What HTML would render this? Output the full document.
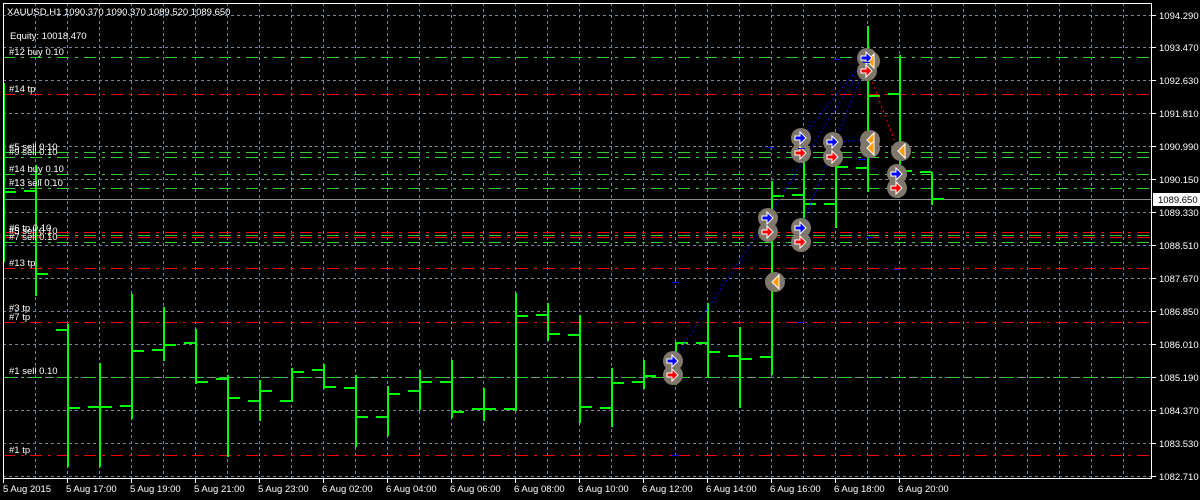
<!DOCTYPE html>
<html><head><meta charset="utf-8">
<style>
html,body{margin:0;padding:0;background:#000;width:1200px;height:500px;overflow:hidden}
svg{display:block}
text{font-family:"Liberation Sans",sans-serif;font-size:9.5px;fill:#fff}
</style></head><body>
<svg id="s" width="1200" height="500" xmlns="http://www.w3.org/2000/svg">
<rect width="1200" height="500" fill="#000"/>
<g id="grid"></g>
<g id="lines"></g>
<line x1="3" y1="199.5" x2="1152" y2="199.5" stroke="#8c8c8c" stroke-width="1"/>
<g id="bars"></g>
<g id="trades" stroke-dasharray="2 3" stroke-width="1" fill="none">
<line x1="673" y1="361" x2="768" y2="218" stroke="#0000ff"/>
<line x1="768" y1="218" x2="867" y2="58" stroke="#0000ff"/>
<line x1="801" y1="138" x2="867" y2="58" stroke="#0000ff"/>
<line x1="801" y1="228" x2="867" y2="62" stroke="#0000ff"/>
<line x1="833" y1="142" x2="870" y2="140" stroke="#0000ff"/>
<line x1="869" y1="73" x2="898" y2="150" stroke="#ff0000"/>
</g>
<g id="marks"></g>
<g id="tickmarks"></g>
<rect x="3.5" y="3.5" width="1148" height="475" fill="none" stroke="#fff" stroke-width="1"/>
<text x="7" y="15">XAUUSD,H1  1090.370 1090.370 1089.520 1089.650</text>
<text x="10" y="39">Equity: 10018.470</text>
<text x="9" y="55">#12 buy 0.10</text>
<text x="9" y="92">#14 tp</text>
<text x="9" y="150">#5 sell 0.10</text>
<text x="9" y="155">#9 sell 0.10</text>
<text x="9" y="172">#14 buy 0.10</text>
<text x="9" y="186">#13 sell 0.10</text>
<text x="9" y="231">#6 tp 0.10</text>
<text x="9" y="234">#5 sell 0.10</text>
<text x="9" y="240">#7 sell 0.10</text>
<text x="9" y="266">#13 tp</text>
<text x="9" y="311">#3 tp</text>
<text x="9" y="320">#7 tp</text>
<text x="9" y="374">#1 sell 0.10</text>
<text x="9" y="453">#1 tp</text>
<g id="axis">
<text x="1159" y="19">1094.290</text>
<text x="1159" y="51">1093.470</text>
<text x="1159" y="84">1092.630</text>
<text x="1159" y="117">1091.810</text>
<text x="1159" y="150">1090.990</text>
<text x="1159" y="183">1090.150</text>
<text x="1159" y="216">1089.330</text>
<text x="1159" y="249">1088.510</text>
<text x="1159" y="282">1087.670</text>
<text x="1159" y="315">1086.850</text>
<text x="1159" y="348">1086.010</text>
<text x="1159" y="381">1085.190</text>
<text x="1159" y="414">1084.370</text>
<text x="1159" y="447">1083.530</text>
<text x="1159" y="480">1082.710</text>
</g>
<rect x="1153" y="193" width="47" height="13" fill="#fff"/>
<text x="1158" y="203" style="fill:#000">1089.650</text>
<g id="dates">
<text x="3" y="492">5 Aug 2015</text>
<text x="66" y="492">5 Aug 17:00</text>
<text x="130" y="492">5 Aug 19:00</text>
<text x="194" y="492">5 Aug 21:00</text>
<text x="258" y="492">5 Aug 23:00</text>
<text x="322" y="492">6 Aug 02:00</text>
<text x="386" y="492">6 Aug 04:00</text>
<text x="450" y="492">6 Aug 06:00</text>
<text x="514" y="492">6 Aug 08:00</text>
<text x="578" y="492">6 Aug 10:00</text>
<text x="642" y="492">6 Aug 12:00</text>
<text x="706" y="492">6 Aug 14:00</text>
<text x="770" y="492">6 Aug 16:00</text>
<text x="834" y="492">6 Aug 18:00</text>
<text x="898" y="492">6 Aug 20:00</text>
</g>
</svg>
<script>
var NS="http://www.w3.org/2000/svg";
function el(p,t,a){var e=document.createElementNS(NS,t);for(var k in a)e.setAttribute(k,a[k]);document.getElementById(p).appendChild(e);return e;}
var ys=[15,47,80,113,146,179,212,245,278,311,344,377,410,443,476];
ys.forEach(function(y){el('grid','line',{x1:3,x2:1152,y1:y+.5,y2:y+.5,stroke:'#778899','stroke-dasharray':'3 3'});
 el('tickmarks','line',{x1:1152,x2:1156,y1:y+.5,y2:y+.5,stroke:'#fff'});});
for(var x=35;x<1152;x+=32){el('grid','line',{x1:x+.5,x2:x+.5,y1:3,y2:478,stroke:'#778899','stroke-dasharray':'3 3'});}
for(var x=3;x<=899;x+=64){el('tickmarks','line',{x1:x+.5,x2:x+.5,y1:478,y2:483,stroke:'#fff'});}
var L=[[57,'g'],[94,'r'],[152,'g'],[157,'g'],[174,'g'],[188,'g'],[232,'r'],[235,'g'],[237,'r'],[242,'g'],[268,'r'],[322,'r'],[377,'g'],[455,'r']];
L.forEach(function(l){el('lines','line',{x1:3,x2:1150,y1:l[0]+.5,y2:l[0]+.5,stroke:l[1]=='g'?'#32cd32':'#ff0000','stroke-dasharray':'12 6 3 6'});});
var B=[[3,192,83,262,192],[35,191,165,296,274],[67,330,324,467,408],[99,407,363,467,407],[131,406,294,419,351],[163,350,307,361,345],[195,343,329,384,382],[227,379,375,457,398],[259,401,380,421,391],[291,401,368,402,372],[323,370,364,389,387],[355,388,375,447,417],[387,417,386,436,394],[419,391,370,410,382],[451,382,360,418,412],[483,409,388,421,409],[515,409,293,411,316],[547,315,303,341,334],[579,335,315,423,407],[611,408,368,427,383],[643,382,360,389,376],[675,376,342,385,343],[707,343,303,378,352],[739,356,327,408,359],[771,357,181,375,196],[803,195,143,245,204],[835,204,163,228,167],[867,168,26,192,96],[899,94,55,185,171],[931,172,172,205,199]];
B.forEach(function(b){var x=b[0];
 el('bars','rect',{x:x,y:b[2],width:2,height:b[3]-b[2],fill:'#00ff00'});
 if(x>3)el('bars','rect',{x:x-11,y:b[1]-1,width:11,height:2,fill:'#00ff00'});
 el('bars','rect',{x:x+2,y:b[4]-1,width:11,height:2,fill:'#00ff00'});});
function circ(x,y){el('marks','circle',{cx:x,cy:y,r:10,fill:'#81786c'});}
function arrow(x,y,c){el('marks','path',{d:'M'+(x-6)+' '+(y-2)+'h5v-4l6 6l-6 6v-4h-5z',fill:c,stroke:'#fff','stroke-width':1});}
function tri(x,y){el('marks','path',{d:'M'+(x+4)+' '+(y-7)+'v14l-7-7z',fill:'#ff9900',stroke:'#fff','stroke-width':1});}
var M=[[673,361,'b'],[673,375,'r'],[768,218,'b'],[768,232,'r'],[775,282,'t'],[801,138,'b'],[801,153,'r'],[801,228,'b'],[801,242,'r'],[833,142,'b'],[833,157,'r'],[870,61,'t'],[867,58,'b'],[867,71,'r'],[870,140,'t'],[870,148,'t'],[901,151,'t'],[897,174,'b'],[897,188,'r']];
M.forEach(function(m){circ(m[0],m[1]);});
M.forEach(function(m){if(m[2]=='t')tri(m[0],m[1]);else arrow(m[0],m[1],m[2]=='b'?'#0000ff':'#ff0000');});
[[675,282],[801,322],[837,59],[866,62],[869,237],[897,269],[862,159],[801,148],[675,455],[770,147]].forEach(function(p){el('marks','line',{x1:p[0]-3,x2:p[0]+4,y1:p[1]+.5,y2:p[1]+.5,stroke:'#0000ff'});});
</script>
</body></html>
